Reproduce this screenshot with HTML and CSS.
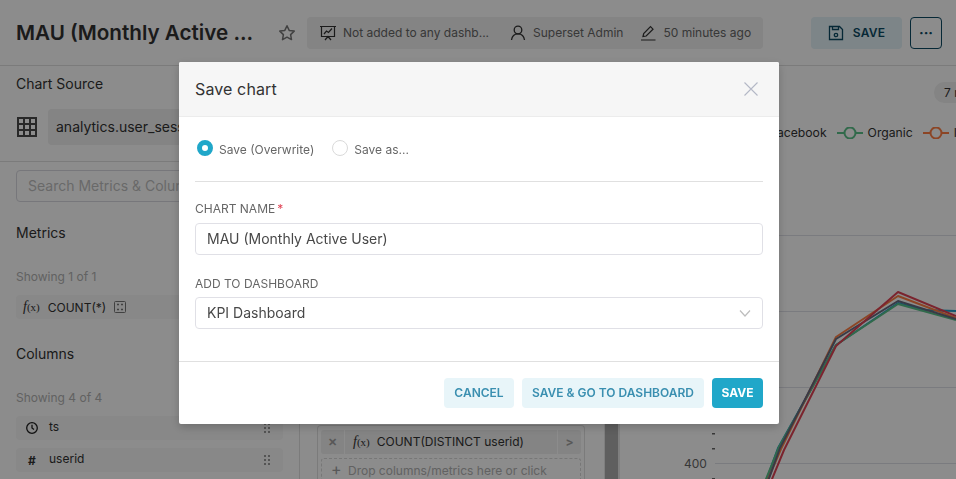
FILE: index.html
```html
<!DOCTYPE html>
<html lang="en">
<head>
<meta charset="utf-8">
<title>Save chart</title>
<link rel="stylesheet" href="styles.css">
</head>
<body>
<div class="page">
  <header class="top">
    <h1 class="title">MAU (Monthly Active ...</h1>
    <svg class="star" width="18" height="18" viewBox="0 0 18 18"><path d="M9 1.800l2.200 4.600 5 .7-3.600 3.500.9 5L9 13.200l-4.500 2.400.9-5L1.800 7.100l5-.7z" fill="none" stroke="#777" stroke-width="1.500" stroke-linejoin="round"/></svg>
    <div class="meta">
      <span class="meta-item">
        <svg width="18" height="18" viewBox="0 0 18 18" fill="none" stroke="#323232" stroke-width="1.200"><path d="M1 2.500h16M2.500 2.500v10h13v-10M6 16l3-3.500 3 3.500M5 10l2.500-3 2 1.500 3.500-4"/></svg>
        <span class="meta-text meta-dash">Not added to any dashb...</span>
      </span>
      <span class="meta-item">
        <svg width="18" height="18" viewBox="0 0 18 18" fill="none" stroke="#323232" stroke-width="1.300"><circle cx="9" cy="6" r="3.800"/><path d="M2.500 16c.5-4 3-6.200 6.500-6.200s6 2.200 6.500 6.200"/></svg>
        <span class="meta-text">Superset Admin</span>
      </span>
      <span class="meta-item">
        <svg width="18" height="18" viewBox="0 0 18 18" fill="none" stroke="#323232" stroke-width="1.200"><path d="M4 12.500l.7-3L11.500 2.700l2.500 2.500-6.800 6.800zM2 16h14.500"/></svg>
        <span class="meta-text">50 minutes ago</span>
      </span>
    </div>
    <div class="top-actions">
      <button class="btn-save-top">
        <svg width="16" height="16" viewBox="0 0 16 16" fill="none" stroke="#0b4a63" stroke-width="1.300"><path d="M1.500 1.500h10l3 3v10h-13zM4.500 1.500v3h6v-3"/><circle cx="8" cy="10" r="1.700"/></svg>
        SAVE
      </button>
      <button class="btn-more">···</button>
    </div>
  </header>
  <main class="body">
    <aside class="left">
      <section class="source">
        <div class="section-title">Chart Source</div>
        <div class="source-row">
          <svg width="22" height="22" viewBox="0 0 22 22" fill="none" stroke="#4a4a4a" stroke-width="2"><rect x="2" y="2" width="18" height="18"/><path d="M2 8h18M2 14h18M8 2v18M14 2v18"/></svg>
          <span class="source-name">analytics.user_sessions</span>
        </div>
      </section>
      <section class="lists">
        <div class="search">Search Metrics &amp; Columns</div>
        <div class="group-title">Metrics</div>
        <div class="showing">Showing 1 of 1</div>
        <div class="item">
          <i class="fx"><em>f</em>(x)</i><span>COUNT(*)</span>
          <svg class="calc" width="12" height="12" viewBox="0 0 12 12" fill="none" stroke="#777" stroke-width="1"><rect x=".5" y=".5" width="11" height="11" rx="1"/><path d="M3 3.500h2M7 3.500h2M3 8.500h2M7 8.500h2" stroke-width="1.500"/></svg>
        </div>
        <div class="group-title">Columns</div>
        <div class="showing">Showing 4 of 4</div>
        <div class="item item-col">
          <svg width="14" height="14" viewBox="0 0 14 14" fill="none" stroke="#1f1f1f" stroke-width="1.300"><circle cx="7" cy="7" r="5.300"/><path d="M7 3.800V7l2 1.500"/></svg>
          <span class="col-name">ts</span><span class="grip"></span>
        </div>
        <div class="item item-col">
          <span class="hash">#</span>
          <span class="col-name">userid</span><span class="grip"></span>
        </div>
      </section>
    </aside>
    <section class="middle">
      <div class="well">
        <div class="pill">
          <span class="pill-x">✕</span>
          <i class="fx"><em>f</em>(x)</i>
          <span class="pill-label">COUNT(DISTINCT userid)</span>
          <span class="pill-arrow">&gt;</span>
        </div>
        <div class="drop"><b>+</b> Drop columns/metrics here or click</div>
      </div>
    </section>
    <div class="scroller"></div>
    <section class="chart">
      <div class="rows-badge">7 rows</div>
      <div class="legend">
        <span class="leg">Facebook</span>
        <span class="leg"><svg width="26" height="12" viewBox="0 0 26 12" fill="none" stroke="#5ac189" stroke-width="2"><path d="M0 6h7M19 6h7"/><circle cx="13" cy="6" r="5.500"/></svg>Organic</span>
        <span class="leg"><svg width="26" height="12" viewBox="0 0 26 12" fill="none" stroke="#ff7f44" stroke-width="2"><path d="M0 6h7M19 6h7"/><circle cx="13" cy="6" r="5.500"/></svg>Instagram</span>
      </div>
      <svg class="plot" width="336" height="479" viewBox="620 0 336 479" fill="none">
        <g stroke="#dfe0e8" stroke-width="1">
          <path d="M715 235.500H956M715 311.500H956M715 387.500H956M715 463.500H956"/>
        </g>
        <g fill="#666">
          <rect x="712" y="433" width="3" height="1.500"/><rect x="712" y="448" width="3" height="1.500"/><rect x="712" y="478" width="3" height="1.500"/>
        </g>
        <text x="684" y="468" class="tick">400</text>
        <g stroke-width="2" stroke-linejoin="round">
          <path d="M765 484L778 448L836 345L898 303L925 310L956 311" stroke="#1f9fc9"/>
          <path d="M764 484L779 447L836 345L898 304L956 320" stroke="#5ac189"/>
          <path d="M766 484L781 449L836 337L898 296L956 318" stroke="#ff7f44"/>
          <path d="M767 484L780 448L836 339L898 301L956 319" stroke="#666b80"/>
          <path d="M770 484L784 450L836 346L898 292L956 316" stroke="#e04355"/>
        </g>
      </svg>
    </section>
  </main>
</div>
<div class="mask"></div>
<div class="modal" role="dialog">
  <div class="modal-head">
    <span>Save chart</span>
    <svg class="close" width="14" height="14" viewBox="0 0 14 14" fill="none" stroke="#b4b8c6" stroke-width="1.100"><path d="M.5.5l13 13M13.500.5l-13 13"/></svg>
  </div>
  <div class="modal-body">
    <div class="radios">
      <label class="radio"><span class="dot dot-on"></span><span class="radio-text">Save (Overwrite)</span></label>
      <label class="radio"><span class="dot"></span><span class="radio-text">Save as...</span></label>
    </div>
    <hr class="rule">
    <label class="field-label">CHART NAME<sup class="req">*</sup></label>
    <div class="input">MAU (Monthly Active User)</div>
    <label class="field-label field-dash">ADD TO DASHBOARD</label>
    <div class="input select">KPI Dashboard
      <svg width="12" height="8" viewBox="0 0 12 8" fill="none" stroke="#bdbdbd" stroke-width="1.200"><path d="M1 1.500l5 5.500 5-5.500"/></svg>
    </div>
  </div>
  <div class="modal-foot">
    <button class="btn btn-light btn-cancel">CANCEL</button>
    <button class="btn btn-light btn-go">SAVE &amp; GO TO DASHBOARD</button>
    <button class="btn btn-primary">SAVE</button>
  </div>
</div>
</body>
</html>
```
FILE: styles.css
```css
* { box-sizing: border-box; }
html, body { margin: 0; height: 100%; }
body { font-family: Inter, "Liberation Sans", sans-serif; color: #323232; overflow: hidden; background: #fff; }
.page { width: 956px; height: 479px; display: flex; flex-direction: column; overflow: hidden; }

.top { height: 66px; flex: none; display: flex; align-items: center; padding: 0 14px 0 16px; border-bottom: 1px solid #e0e0e0; }
.title { margin: 0; font-size: 20.650px; font-weight: 600; color: #323232; white-space: nowrap; width: 254px; }
.star { margin-left: 8px; }
.meta { margin-left: 11px; height: 32px; width: 456px; display: flex; align-items: center; gap: 16px; padding: 0 0 0 12px; background: #f0f0f0; border-radius: 4px; font-size: 12px; }
.meta-item { display: flex; align-items: center; gap: 6px; white-space: nowrap; }
.meta-text { color: #666; }
.meta-dash { width: 150px; }
.top-actions { margin-left: auto; display: flex; gap: 8px; }
.btn-save-top { width: 91px; height: 32px; border: 0; border-radius: 4px; background: #e3f2f7; color: #0b4a63; font: 600 12px Inter, sans-serif; display: flex; align-items: center; justify-content: center; gap: 9px; letter-spacing: .2px; }
.btn-more { width: 32px; height: 32px; background: #fff; border: 1px solid #0b4a63; border-radius: 4px; color: #0b4a63; font: 700 14px Inter, sans-serif; padding: 0; }

.body { flex: 1; display: flex; min-height: 0; }
.left { width: 300px; flex: none; border-right: 1px solid #e0e0e0; }
.source { height: 96px; padding: 9px 16px 0; border-bottom: 1px solid #e0e0e0; margin-right: -1px; }
.section-title { font-size: 14px; line-height: 17px; color: #323232; }
.source-row { display: flex; align-items: center; gap: 10px; margin-top: 17px; }
.source-name { flex: 1; height: 36px; background: #f0f0f0; border-radius: 4px; padding-left: 8px; line-height: 36px; font-size: 14px; white-space: nowrap; overflow: hidden; }
.lists { padding: 8px 16px 0; }
.search { height: 32px; border: 1px solid #d9d9e0; border-radius: 4px; padding-left: 11px; line-height: 30px; font-size: 14px; color: #bfbfbf; white-space: nowrap; overflow: hidden; }
.group-title { font-size: 14px; line-height: 17px; margin-top: 22px; }
.item + .group-title { margin-top: 26px; }
.showing { font-size: 12px; line-height: 15px; color: #b2b2b2; margin-top: 28px; }
.item { height: 24px; background: #f7f7f7; border-radius: 4px; display: flex; align-items: center; gap: 8px; font-size: 12px; margin-top: 8px; padding-left: 7px; color: #323232; }
.showing + .item { margin-top: 11px; }
.item-col { padding-left: 9px; gap: 10px; }
.col-name { margin-bottom: 3px; }
.fx { font: 11px "Liberation Serif", serif; color: #323232; }
.fx em { font-size: 14px; }
.hash { width: 14px; text-align: center; font-weight: 700; font-size: 12px; }
.grip { margin-left: auto; margin-right: 12px; width: 8px; height: 12px; background: radial-gradient(circle, #999 1.300px, transparent 1.500px) 0 0 / 4px 4px; }

.middle { width: 305px; flex: none; display: flex; flex-direction: column; justify-content: flex-end; padding: 0 19px 0 17px; border-right: 1px solid #e8e8e8; }
.well { height: 54px; border: 1px solid #e0e0e0; border-bottom: 0; border-radius: 4px 4px 0 0; padding: 4px 3px 0; flex: none; }
.pill { height: 24px; display: flex; align-items: center; background: #f0f0f0; border-radius: 3px; font-size: 12px; }
.pill-x { width: 24px; height: 24px; line-height: 24px; text-align: center; font-size: 11px; font-weight: 700; color: #a0a0a0; border-right: 1px solid #fff; }
.pill .fx { margin-left: 8px; }
.pill-label { margin-left: 7px; flex: 1; color: #323232; margin-bottom: 2px; }
.pill-arrow { width: 24px; line-height: 24px; text-align: center; font-weight: 700; color: #a0a0a0; border-left: 1px solid #fff; }
.drop { height: 22px; margin-top: 4px; border: 1px dashed #d9d9d9; border-bottom: 0; border-radius: 3px 3px 0 0; padding-left: 9px; line-height: 20px; font-size: 12px; color: #b2b2b2; white-space: nowrap; }
.drop b { font-size: 16px; color: #a0a0a0; margin-right: 3px; font-weight: 400; }
.scroller { width: 13px; flex: none; background: #adadad; }

.chart { flex: 1; position: relative; min-width: 0; border-left: 2px solid #e8e8e8; }
.plot { position: absolute; left: 0; top: -66px; }
.tick { font: 12px Inter, sans-serif; fill: #666; }
.rows-badge { position: absolute; left: 314px; top: 16px; height: 21px; width: 60px; border-radius: 11px; background: #f0f0f0; font-size: 12px; line-height: 21px; padding-left: 10px; white-space: nowrap; }
.legend { position: absolute; top: 59px; left: 150px; display: flex; gap: 10px; font-size: 12.200px; white-space: nowrap; color: #323232; }
.leg { display: flex; align-items: center; gap: 5px; }

.mask { position: fixed; inset: 0; background: rgba(0, 0, 0, .45); }
.modal { position: fixed; left: 179px; top: 62px; width: 600px; height: 362px; background: #fff; border-radius: 2px; box-shadow: 0 3px 10px rgba(0,0,0,.2); display: flex; flex-direction: column; }
.modal-head { height: 55px; flex: none; background: #f6f6f6; border-bottom: 1px solid #ececec; display: flex; align-items: center; justify-content: space-between; padding: 0 21px 0 16px; font-size: 16px; letter-spacing: .12px; color: #323232; border-radius: 2px 2px 0 0; }
.modal-body { flex: 1; padding: 23px 16px 0; }
.radios { display: flex; gap: 18px; height: 17px; padding-left: 2px; }
.radio { display: flex; align-items: center; gap: 5px; font-size: 12px; color: #666; }
.radio-text { margin-top: 2px; }
.dot { width: 16px; height: 16px; border: 1px solid #d9d9d9; border-radius: 50%; background: #fff; margin: 0 1px 2px 0; }
.dot-on { border: 5px solid #20a7c9; background: #fff; }
.rule { margin: 0; border: 0; height: 1px; background: #e0e0e0; margin-top: 24px; }
.field-label { display: block; font-size: 12px; line-height: 15px; color: #666; margin-top: 19px; }
.req { color: #e04355; font-size: 12px; line-height: 0; vertical-align: baseline; margin-left: 2px; }
.input { height: 32px; margin-top: 7px; border: 1px solid #e0e0e6; border-radius: 4px; padding-left: 11px; line-height: 30px; font-size: 14px; color: #484848; }
.field-dash { margin-top: 21px; }
.select { display: flex; align-items: center; justify-content: space-between; padding-right: 11px; margin-top: 6px; }
.modal-foot { height: 63px; flex: none; border-top: 1px solid #e0e0e0; display: flex; align-items: flex-start; justify-content: flex-end; gap: 8px; padding: 16px 16px 0; }
.btn { height: 30px; border: 0; border-radius: 4px; font: 600 12px Inter, sans-serif; padding: 0 0 1px; }
.btn-cancel { width: 70px; }
.btn-go { width: 182px; }
.btn-light { background: #e8f5f9; color: #3a8fb0; }
.btn-primary { width: 51px; background: #20a7c9; color: #fff; font-weight: 700; }
```
